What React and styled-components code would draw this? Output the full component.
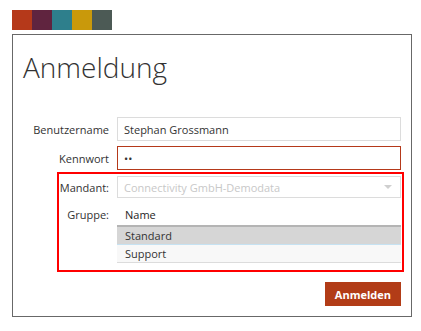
import React from "react";
import styled, { createGlobalStyle } from "styled-components";

const GlobalStyle = createGlobalStyle`
  body {
    margin: 0;
    background: #fff;
    font-family: "Open Sans", "Liberation Sans", sans-serif;
    color: #333;
  }
`;

const Page = styled.div`
  padding: 10px 0 0 12px;
  width: 400px;
`;

const Swatches = styled.div`
  display: flex;
  height: 20px;
  margin-bottom: 4px;
`;

const Swatch = styled.div`
  width: 20px;
  height: 20px;
  background: ${(props) => props.color};
`;

const Panel = styled.div`
  border: 1px solid #686868;
  padding: 0 10px 10px 10px;
  display: flex;
  flex-direction: column;
`;

const Title = styled.h1`
  margin: 13px 0 31px 0;
  font-size: 28px;
  font-weight: 300;
  line-height: 38px;
  color: #333;
`;

const Row = styled.div`
  display: grid;
  grid-template-columns: ${(props) => props.labelWidth || 86}px 1fr;
  column-gap: 8px;
  align-items: ${(props) => props.top ? "start" : "center"};
  margin-bottom: ${(props) => props.gap || 0}px;
`;

const Label = styled.label`
  font-size: 11px;
  text-align: right;
  color: #333;
  line-height: ${(props) => props.lh || 15}px;
`;

const Input = styled.input`
  box-sizing: border-box;
  width: 100%;
  height: ${(props) => props.h || 24}px;
  margin: 0;
  padding: 0 6px;
  border: 1px solid ${(props) => props.error ? "#b5391a" : "#dcdcdc"};
  outline: none;
  font-family: "Open Sans", "Liberation Sans", sans-serif;
  font-size: 11px;
  color: #333;
  background: #fff;
`;

const Select = styled.div`
  box-sizing: border-box;
  height: 22px;
  border: 1px solid #dcdcdc;
  padding: 0 8px 0 6px;
  display: flex;
  align-items: center;
  justify-content: space-between;
  font-size: 11px;
  color: #c8c8c8;
`;

const Caret = styled.span`
  width: 0;
  height: 0;
  border-left: 4px solid transparent;
  border-right: 4px solid transparent;
  border-top: 4px solid #cfcfcf;
`;

const Highlight = styled.div`
  border: 2px solid #ff0000;
  margin: 2px -3px 0 34px;
  padding: 2px 1px 7px 0;
`;

const Table = styled.div`
  display: flex;
  flex-direction: column;
  font-size: 11px;
`;

const HeadCell = styled.div`
  height: 21px;
  line-height: 21px;
  padding-left: 8px;
  font-weight: 500;
  color: #1e1e1e;
  border-bottom: 2px solid #b4b4b4;
`;

const Cell = styled.div`
  height: 17px;
  line-height: 17px;
  padding-left: 8px;
  color: #333;
  background: ${(props) => props.selected ? "#d6d6d6" : "#f8f8f8"};
  border-bottom: 1px solid ${(props) => props.selected ? "#c6e2f2" : "#dcdcdc"};
`;

const Footer = styled.div`
  display: flex;
  justify-content: flex-end;
  margin-top: 10px;
`;

const Button = styled.button`
  height: 24px;
  padding: 0 10px;
  border: none;
  background: #b23c17;
  color: #fff;
  font-family: "Open Sans", "Liberation Sans", sans-serif;
  font-size: 11px;
  font-weight: 700;
`;

const colors = ["#b5391a", "#60243f", "#2e7f8c", "#c9990b", "#4c5a55"];

export default function App() {
  return (
    <Page>
      <GlobalStyle />
      <Swatches>
        {colors.map((c) => (
          <Swatch key={c} color={c} />
        ))}
      </Swatches>
      <Panel>
        <Title>Anmeldung</Title>
        <Row gap={5}>
          <Label>Benutzername</Label>
          <Input defaultValue="Stephan Grossmann" />
        </Row>
        <Row>
          <Label>Kennwort</Label>
          <Input error type="password" defaultValue="ab" />
        </Row>
        <Highlight>
          <Row labelWidth={50} gap={6}>
            <Label>Mandant:</Label>
            <Select>
              Connectivity GmbH-Demodata
              <Caret />
            </Select>
          </Row>
          <Row labelWidth={50} top>
            <Label lh={21}>Gruppe:</Label>
            <Table>
              <HeadCell>Name</HeadCell>
              <Cell selected>Standard</Cell>
              <Cell>Support</Cell>
            </Table>
          </Row>
        </Highlight>
        <Footer>
          <Button>Anmelden</Button>
        </Footer>
      </Panel>
    </Page>
  );
}
